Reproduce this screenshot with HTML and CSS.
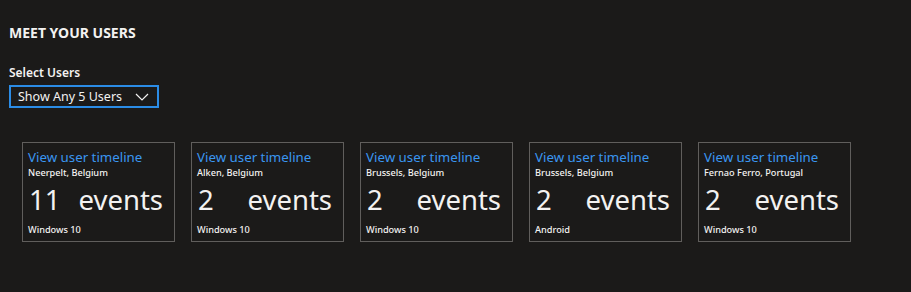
FILE: index.html
```html
<!DOCTYPE html>
<html>
<head>
	<title>Meet your users</title>
	<link rel="stylesheet" href="styles.css">
</head>
<body>
	<div class="page">
		<h2 class="title">MEET YOUR USERS</h2>
		<label class="select-label">Select Users</label>
		<div class="dropdown">
			<span>Show Any 5 Users</span>
			<svg class="chevron" width="14" height="8" viewBox="0 0 14 8"><path d="M1 1 L7 7 L13 1" fill="none" stroke="#f3f2f1" stroke-width="1.2"/></svg>
		</div>
		<div class="cards">
			<div class="card">
				<a href="#" class="link">View user timeline</a>
				<div class="place">Neerpelt, Belgium</div>
				<div class="count"><span>11</span><span>events</span></div>
				<div class="os">Windows 10</div>
			</div>
			<div class="card">
				<a href="#" class="link">View user timeline</a>
				<div class="place">Alken, Belgium</div>
				<div class="count"><span>2</span><span>events</span></div>
				<div class="os">Windows 10</div>
			</div>
			<div class="card">
				<a href="#" class="link">View user timeline</a>
				<div class="place">Brussels, Belgium</div>
				<div class="count"><span>2</span><span>events</span></div>
				<div class="os">Windows 10</div>
			</div>
			<div class="card">
				<a href="#" class="link">View user timeline</a>
				<div class="place">Brussels, Belgium</div>
				<div class="count"><span>2</span><span>events</span></div>
				<div class="os">Android</div>
			</div>
			<div class="card">
				<a href="#" class="link">View user timeline</a>
				<div class="place">Fernao Ferro, Portugal</div>
				<div class="count"><span>2</span><span>events</span></div>
				<div class="os">Windows 10</div>
			</div>
		</div>
	</div>
</body>
</html>
```

FILE: styles.css
```css
html, body {
	margin: 0;
	background-color: #1b1a19;
	color: #f3f2f1;
	font-family: 'Noto Sans', sans-serif;
}
.page {
	padding: 24px 9px 0 9px;
}
.title {
	font-size: 14px;
	font-weight: bold;
	margin: 0 0 22px 0;
	line-height: 18px;
}
.select-label {
	display: block;
	font-size: 12px;
	font-weight: 600;
	line-height: 18px;
	margin-bottom: 3px;
}
.dropdown {
	display: flex;
	justify-content: space-between;
	align-items: center;
	box-sizing: border-box;
	width: 150px;
	height: 23px;
	border: 2px solid #2b8ce6;
	padding: 0 8px 0 7px;
	font-size: 12.5px;
}
.chevron {
	display: block;
}
.cards {
	display: flex;
	gap: 16px;
	margin: 34px 0 0 13px;
}
.card {
	box-sizing: border-box;
	width: 153px;
	height: 100px;
	border: 1px solid #605e5c;
	padding: 6px 11px 0 5px;
}
.link {
	display: block;
	color: #3a96f0;
	text-decoration: none;
	font-size: 13.3px;
	line-height: 17px;
}
.place, .os {
	font-size: 9.2px;
	font-weight: 500;
	line-height: 13px;
}
.count {
	display: flex;
	justify-content: space-between;
	font-size: 27.5px;
	line-height: 34px;
	margin: 4px 0 6px 1px;
}
```
